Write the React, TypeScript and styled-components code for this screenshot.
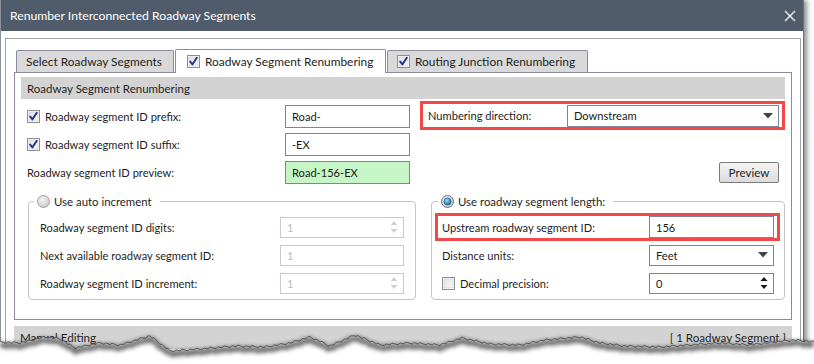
import React from "react";
import styled, { createGlobalStyle } from "styled-components";

const GlobalStyle = createGlobalStyle`
  html, body {
    margin: 0;
    padding: 0;
    background: #fff;
  }
  body {
    font-family: Lato, "Noto Sans", sans-serif;
    font-size: 11.1px;
    color: #1e1e1e;
  }
  * {
    box-sizing: border-box;
  }
  svg {
    flex-shrink: 0;
  }
`;

const Stage = styled.div`
  position: relative;
  width: 814px;
  height: 364px;
  overflow: hidden;
  background: #fff;
`;

const Window = styled.div`
  width: 804px;
  height: 364px;
  background: #fff;
  border-left: 1px solid #8a929c;
  border-right: 1px solid #6c737c;
  box-shadow: 3px 0 5px rgba(0, 0, 0, 0.45);
`;

const TitleBar = styled.div`
  height: 31px;
  background: #505c6b;
  display: flex;
  align-items: center;
  justify-content: space-between;
  padding: 0 7px 0 9px;
  color: #fff;
  font-size: 12.2px;
`;

const Frame = styled.div`
  margin: 7px 2px 0 4px;
  height: 333px;
  border: 1px solid #a3a3a3;
  border-bottom: none;
  padding: 10px 8px 0 8px;
`;

const TabStrip = styled.div`
  position: relative;
  z-index: 1;
  display: flex;
  align-items: flex-end;
  height: 24px;
  margin-bottom: -1px;
  padding-left: 2px;
`;

const Tab = styled.div<{ $active?: boolean; $width: number }>`
  width: ${(p) => p.$width}px;
  height: ${(p) => (p.$active ? 24 : 22)}px;
  margin-bottom: ${(p) => (p.$active ? 0 : 1)}px;
  margin-right: 1px;
  border: 1px solid #8b8ba0;
  border-bottom: none;
  border-radius: 2px 2px 0 0;
  background: ${(p) => (p.$active ? "#fff" : "#d9d9d9")};
  display: flex;
  align-items: center;
  gap: 5px;
  padding-left: ${(p) => (p.$active ? 11 : 9)}px;
  font-size: 11.9px;
  white-space: nowrap;
`;

const Panel = styled.div`
  border: 1px solid #8b8ba0;
  padding: 4px 6px 19px;
`;

const SectionHeader = styled.div`
  height: 22px;
  background: #d3d3d3;
  display: flex;
  align-items: center;
  padding-left: 6px;
  font-size: 11.5px;
`;

const TopGrid = styled.div`
  display: grid;
  grid-template-columns: 383px 1fr;
  grid-template-rows: repeat(3, 28px);
  column-gap: 10px;
  padding: 3px 0 0 6px;
`;

const FieldRow = styled.div`
  display: flex;
  align-items: center;
  justify-content: space-between;
  height: 28px;
  white-space: nowrap;
`;

const CheckLabel = styled.label`
  display: flex;
  align-items: center;
  gap: 5px;
`;

const TextBox = styled.div<{ $width?: number; $height?: number; $bg?: string; $disabled?: boolean }>`
  width: ${(p) => p.$width ?? 125}px;
  height: ${(p) => p.$height ?? 23}px;
  border: 1px solid ${(p) => (p.$disabled ? "#c9c9d3" : "#82829a")};
  background: ${(p) => p.$bg ?? "#fff"};
  color: ${(p) => (p.$disabled ? "#b9b9c2" : "#1a1a1a")};
  display: flex;
  align-items: center;
  justify-content: space-between;
  padding: 0 5px 0 6px;
`;

const Highlight = styled.div<{ $inset?: boolean }>`
  border: 3px solid #f24848;
  display: flex;
  align-items: center;
  justify-content: space-between;
  white-space: nowrap;
  height: ${(p) => (p.$inset ? 28 : 29)}px;
  padding: ${(p) => (p.$inset ? "0 3px 0 4px" : "0 3px 0 5px")};
  margin: ${(p) => (p.$inset ? "0 -6px 0 -7px" : "-1px 0 0")};
  align-self: start;
`;

const Button = styled.div`
  justify-self: end;
  align-self: center;
  margin-right: 6px;
  width: 60px;
  height: 21px;
  border: 1px solid #7a7a7a;
  border-radius: 2px;
  background: linear-gradient(#f4f4f4, #dcdcdc);
  display: flex;
  align-items: center;
  justify-content: center;
  font-size: 11.6px;
`;

const GroupsRow = styled.div`
  display: flex;
  gap: 15px;
  padding: 9px 0 0 7px;
`;

const Fieldset = styled.fieldset<{ $width: number; $padX: number }>`
  margin: 0;
  width: ${(p) => p.$width}px;
  border: 1px solid #c4c4c4;
  border-radius: 4px;
  padding: 5px ${(p) => p.$padX}px 2px;
  min-width: 0;
`;

const Legend = styled.legend<{ $shift: number }>`
  margin-left: ${(p) => p.$shift}px;
  padding: 0 8px 0 3px;
  display: flex;
  align-items: center;
  gap: 4px;
  font-size: 11.4px;
  white-space: nowrap;
`;

const ManualBar = styled.div`
  margin-top: 6px;
  height: 23px;
  background: #d3d3d3;
  display: flex;
  align-items: center;
  justify-content: space-between;
  padding: 0 6px;
  font-size: 11.6px;
`;

const TornOverlay = styled.svg`
  position: absolute;
  left: 0;
  top: 326px;
`;

const CheckBox = ({ checked }: { checked?: boolean }) => (
  <svg width="13" height="13" viewBox="0 0 13 13">
    <defs>
      <linearGradient id="cbg" x1="0" y1="0" x2="1" y2="1">
        <stop offset="0" stopColor="#e4e4e4" />
        <stop offset="1" stopColor="#f8f8f8" />
      </linearGradient>
    </defs>
    <rect x="0.5" y="0.5" width="12" height="12" fill="#fff" stroke="#8e8f8f" />
    <rect x="2" y="2" width="9" height="9" fill="url(#cbg)" stroke="#c8c8c8" strokeWidth="0.6" />
    {checked && (
      <path d="M3.2 6.6 L5.4 9.4 L9.8 2.8" fill="none" stroke="#25348a" strokeWidth="1.9" strokeLinecap="round" strokeLinejoin="round" />
    )}
  </svg>
);

const Radio = ({ checked }: { checked?: boolean }) => (
  <svg width="13" height="13" viewBox="0 0 13 13">
    <defs>
      <radialGradient id="rgOff" cx="0.4" cy="0.35" r="0.7">
        <stop offset="0" stopColor="#f4f4f4" />
        <stop offset="1" stopColor="#c9c9c9" />
      </radialGradient>
      <radialGradient id="rgOn" cx="0.4" cy="0.35" r="0.7">
        <stop offset="0" stopColor="#8fe0ff" />
        <stop offset="1" stopColor="#1c5f9c" />
      </radialGradient>
    </defs>
    <circle cx="6.5" cy="6.5" r="6" fill="url(#rgOff)" stroke={checked ? "#5c7790" : "#a0a0a0"} />
    {checked && <circle cx="6.5" cy="6.5" r="3.6" fill="url(#rgOn)" stroke="#1f4d78" strokeWidth="0.6" />}
  </svg>
);

const Caret = () => (
  <svg width="10" height="6" viewBox="0 0 10 6">
    <path d="M0 0 H10 L5 5.5 Z" fill="#444" />
  </svg>
);

const SpinArrows = ({ disabled }: { disabled?: boolean }) => (
  <svg width="8" height="14" viewBox="0 0 8 14">
    <path d="M0.5 5 L4 1 L7.5 5 Z" fill={disabled ? "#cfcfd4" : "#1a1a1a"} />
    <path d="M0.5 9 L4 13 L7.5 9 Z" fill={disabled ? "#cfcfd4" : "#1a1a1a"} />
  </svg>
);

const CloseIcon = () => (
  <svg width="12" height="12" viewBox="0 0 12 12">
    <path d="M1 1 L11 11 M11 1 L1 11" stroke="#fff" strokeWidth="1.2" />
  </svg>
);

// torn paper edge at the bottom of the screenshot
const tornControl: [number, number][] = [
  [0, 342], [20, 343], [45, 337], [60, 339], [75, 348], [100, 343], [120, 345],
  [150, 336], [170, 351], [200, 349], [235, 346], [265, 347], [290, 343],
  [310, 337], [330, 346], [355, 335], [380, 345], [410, 343], [440, 345],
  [462, 338], [490, 344], [520, 345], [545, 340], [580, 337], [600, 343],
  [625, 346], [660, 347], [690, 345], [720, 343], [750, 345], [775, 342],
  [795, 340], [814, 342],
];

const tornPoints = (() => {
  const pts: string[] = [];
  let seg = 0;
  for (let x = 0, i = 0; x <= 814; x += 2, i++) {
    while (seg < tornControl.length - 2 && x > tornControl[seg + 1][0]) seg++;
    const [x0, y0] = tornControl[seg];
    const [x1, y1] = tornControl[seg + 1];
    const t = (x - x0) / (x1 - x0);
    const jitter = (((i * 37) % 7) - 3) * 0.35;
    pts.push(`${x},${(y0 + (y1 - y0) * t + jitter - 326).toFixed(1)}`);
  }
  return pts;
})();

const TornEdge = () => {
  const line = tornPoints.join(" ");
  const shadow = tornPoints
    .map((p) => {
      const [x, y] = p.split(",").map(Number);
      return `${x},${(y + 3).toFixed(1)}`;
    })
    .join(" ");
  return (
    <TornOverlay width="814" height="38" viewBox="0 0 814 38">
      <defs>
        <filter id="tornBlur" x="-5%" y="-100%" width="110%" height="300%">
          <feGaussianBlur stdDeviation="2" />
        </filter>
      </defs>
      <polygon points={`0,38 ${line} 814,38`} fill="#fff" />
      <polyline points={shadow} fill="none" stroke="#000" strokeOpacity="0.6" strokeWidth="5" filter="url(#tornBlur)" />
      <polyline points={line} fill="none" stroke="#5a5a5a" strokeWidth="1" />
    </TornOverlay>
  );
};

export default function App() {
  return (
    <>
      <GlobalStyle />
      <Stage>
        <Window>
          <TitleBar>
            <span>Renumber Interconnected Roadway Segments</span>
            <CloseIcon />
          </TitleBar>
          <Frame>
            <TabStrip>
              <Tab $width={158}>Select Roadway Segments</Tab>
              <Tab $width={211} $active>
                <CheckBox checked />
                Roadway Segment Renumbering
              </Tab>
              <Tab $width={201}>
                <CheckBox checked />
                Routing Junction Renumbering
              </Tab>
            </TabStrip>
            <Panel>
              <SectionHeader>Roadway Segment Renumbering</SectionHeader>
              <TopGrid>
                <FieldRow>
                  <CheckLabel>
                    <CheckBox checked />
                    Roadway segment ID prefix:
                  </CheckLabel>
                  <TextBox>Road-</TextBox>
                </FieldRow>
                <Highlight>
                  <span>Numbering direction:</span>
                  <TextBox $width={212} $height={22}>
                    <span>Downstream</span>
                    <Caret />
                  </TextBox>
                </Highlight>
                <FieldRow>
                  <CheckLabel>
                    <CheckBox checked />
                    Roadway segment ID suffix:
                  </CheckLabel>
                  <TextBox>-EX</TextBox>
                </FieldRow>
                <div />
                <FieldRow>
                  <span>Roadway segment ID preview:</span>
                  <TextBox $bg="#c6f5c6">Road-156-EX</TextBox>
                </FieldRow>
                <Button>Preview</Button>
              </TopGrid>
              <GroupsRow>
                <Fieldset $width={388} $padX={11}>
                  <Legend $shift={-6}>
                    <Radio />
                    Use auto increment
                  </Legend>
                  <FieldRow>
                    <span>Roadway segment ID digits:</span>
                    <TextBox $width={124} $height={21} $disabled>
                      <span>1</span>
                      <SpinArrows disabled />
                    </TextBox>
                  </FieldRow>
                  <FieldRow>
                    <span>Next available roadway segment ID:</span>
                    <TextBox $width={124} $height={21} $disabled>
                      <span>1</span>
                    </TextBox>
                  </FieldRow>
                  <FieldRow>
                    <span>Roadway segment ID increment:</span>
                    <TextBox $width={124} $height={21} $disabled>
                      <span>1</span>
                      <SpinArrows disabled />
                    </TextBox>
                  </FieldRow>
                </Fieldset>
                <Fieldset $width={354} $padX={10}>
                  <Legend $shift={-4}>
                    <Radio checked />
                    Use roadway segment length:
                  </Legend>
                  <Highlight $inset>
                    <span>Upstream roadway segment ID:</span>
                    <TextBox $height={22}>156</TextBox>
                  </Highlight>
                  <FieldRow>
                    <span>Distance units:</span>
                    <TextBox $height={21}>
                      <span>Feet</span>
                      <Caret />
                    </TextBox>
                  </FieldRow>
                  <FieldRow>
                    <CheckLabel>
                      <CheckBox />
                      Decimal precision:
                    </CheckLabel>
                    <TextBox $height={21}>
                      <span>0</span>
                      <SpinArrows />
                    </TextBox>
                  </FieldRow>
                </Fieldset>
              </GroupsRow>
            </Panel>
            <ManualBar>
              <span>Manual Editing</span>
              <span>[ 1 Roadway Segment ]</span>
            </ManualBar>
          </Frame>
        </Window>
        <TornEdge />
      </Stage>
    </>
  );
}
